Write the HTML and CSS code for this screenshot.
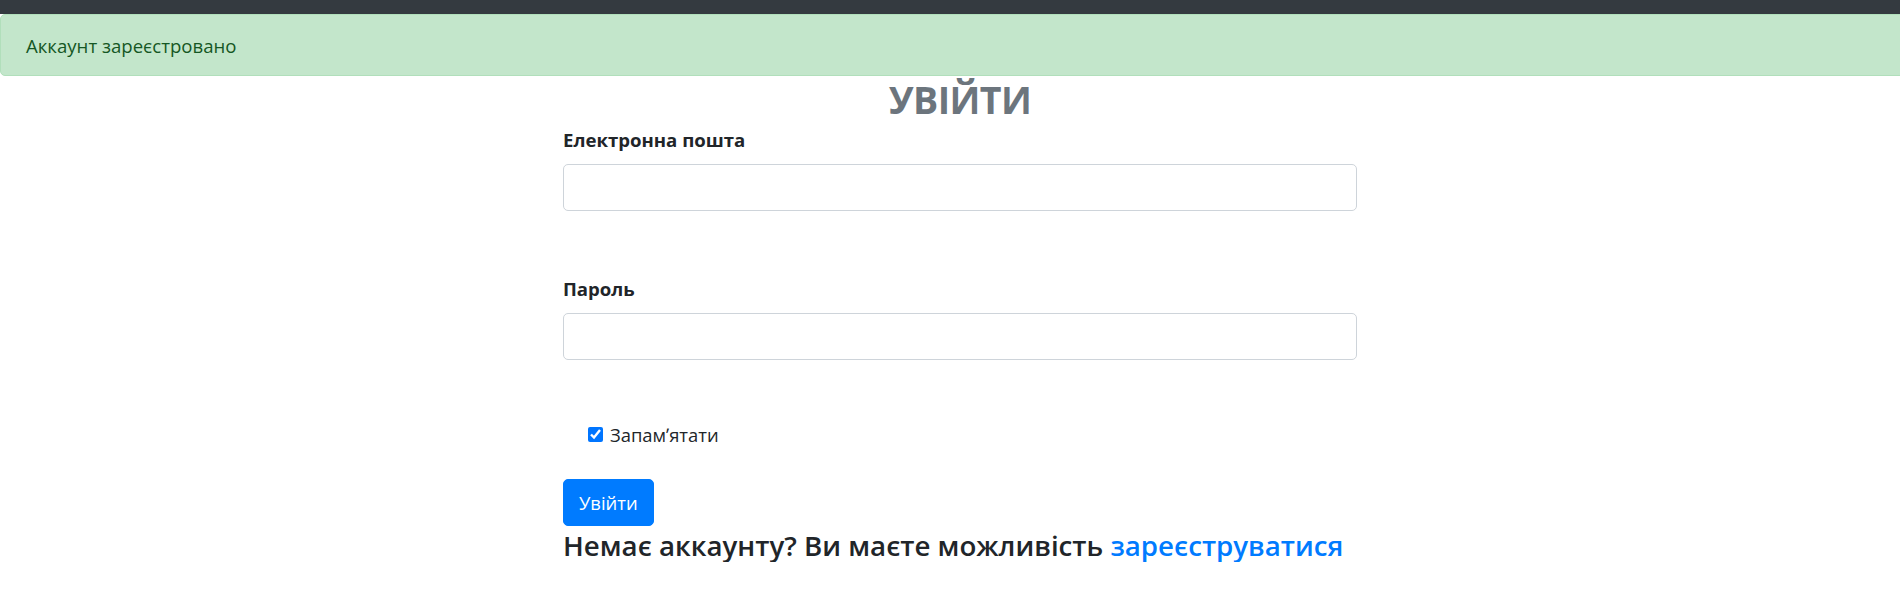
FILE: index.html
```html
<!DOCTYPE html>
<html lang="uk">
<head>
<meta charset="utf-8">
<title>Увійти</title>
<link rel="stylesheet" href="styles.css">
</head>
<body>
<div class="topbar"></div>
<div class="alert">Аккаунт зареєстровано</div>
<div class="page">
  <main class="login">
    <h1 class="title">УВІЙТИ</h1>
    <form class="form">
      <div class="group">
        <label class="label" for="email">Електронна пошта</label>
        <input class="control" id="email" type="email">
      </div>
      <div class="group">
        <label class="label" for="password">Пароль</label>
        <input class="control" id="password" type="password">
      </div>
      <div class="check">
        <input class="check-input" id="remember" type="checkbox" checked>
        <label class="check-label" for="remember">Запамʼятати</label>
      </div>
      <button class="btn" type="button">Увійти</button>
    </form>
    <h3 class="signup">Немає аккаунту? Ви маєте можливість <a class="link" href="#">зареєструватися</a></h3>
  </main>
</div>
</body>
</html>
```
FILE: styles.css
```css
* { box-sizing: border-box; }
html, body { margin: 0; padding: 0; }
html { overflow-x: hidden; }
body {
  font-family: "Open Sans", "Noto Sans", sans-serif;
  font-size: 18.6px;
  line-height: 30px;
  color: #212529;
  background: #fff;
}
.topbar {
  height: 14px;
  background: #343a40;
}
.alert {
  margin-right: -6px;
  background: #c3e6cb;
  border: 1px solid #b1dfbb;
  border-radius: 5px;
  color: #155724;
  padding: 16px 25px 14px;
  line-height: 30px;
}
.page {
  padding-left: 20px;
}
.login {
  width: 794px;
  margin: 0 auto;
}
.title {
  margin: 0;
  text-align: center;
  font-size: 37.5px;
  line-height: 48px;
  letter-spacing: -0.6px;
  font-weight: 700;
  color: #6c757d;
}
.form {
  display: flex;
  flex-direction: column;
  align-items: flex-start;
}
.group {
  width: 100%;
  display: flex;
  flex-direction: column;
  margin-bottom: 62px;
}
.label {
  font-weight: 700;
  margin-bottom: 10px;
  padding-top: 1px;
  line-height: 29px;
}
.control {
  width: 100%;
  height: 47px;
  border: 1px solid #ced4da;
  border-radius: 5px;
  padding: 7px 15px;
  font-family: inherit;
  font-size: 18.6px;
  background: #fff;
}
.group + .check { margin-top: -3px; }
.check {
  display: flex;
  align-items: center;
  padding-left: 25px;
  padding-top: 1px;
  height: 30px;
  margin-bottom: 30px;
}
.check-input {
  width: 15px;
  height: 15px;
  margin: 0 7px 0 0;
  accent-color: #0075ff;
}
.check-label { font-size: 18.4px; }
.btn {
  height: 47px;
  padding: 0 15px;
  font-family: inherit;
  font-size: 18.4px;
  line-height: 30px;
  color: #fff;
  background: #007bff;
  border: 1px solid #007bff;
  border-radius: 5px;
}
.signup {
  margin: 3px 0 0;
  font-size: 27.7px;
  line-height: 33px;
  font-weight: 600;
}
.link {
  color: #007bff;
  text-decoration: none;
}
```
